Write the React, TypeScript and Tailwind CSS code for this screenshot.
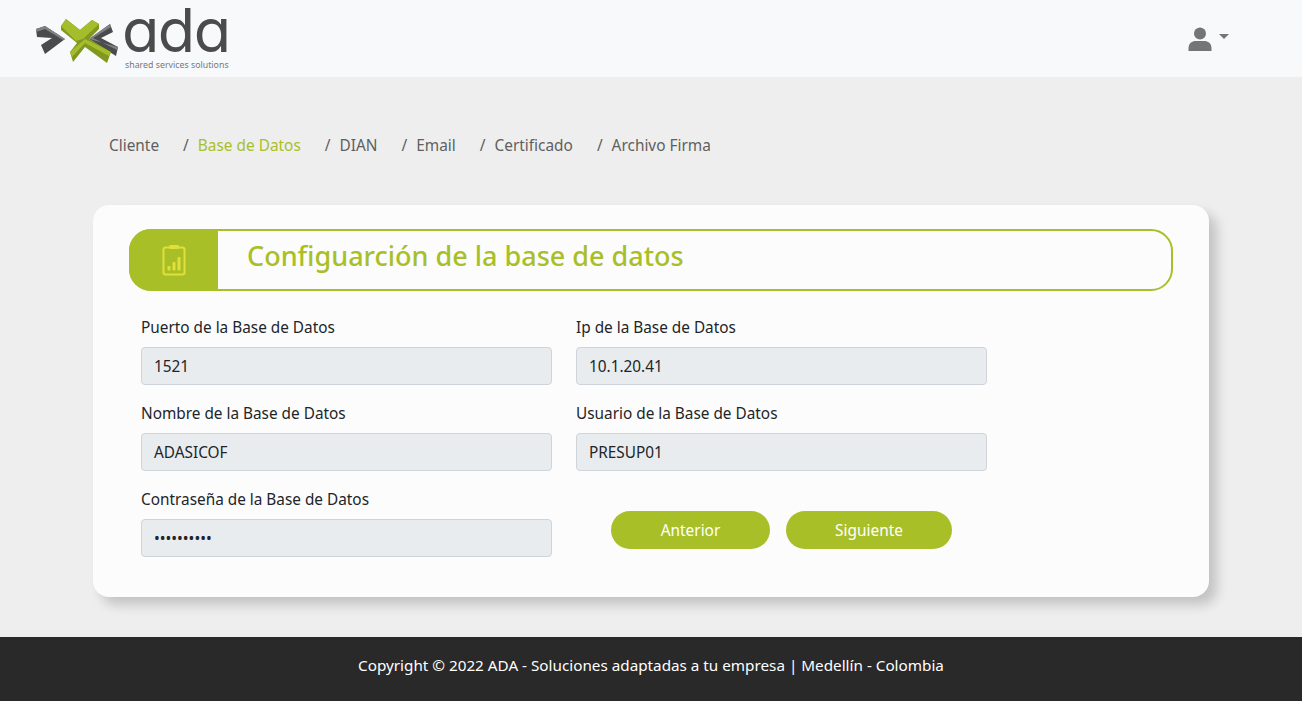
const font = "font-['Noto_Sans',sans-serif]";

function Logo() {
  return (
    <div className="relative w-[240px] h-[77px] shrink-0">
      <svg className="absolute left-[30px] top-[14px]" width="90" height="52" viewBox="0 0 90 52">
        <path d="M6 15 L15 12 L35 25 L15 40 L11 31 L22 24 L7 23Z" fill="#4a4b4d" />
        <path d="M6 15 L15 12 L35 25 L33 26 L15 15 L6 18Z" fill="#808183" />
        <path d="M80 10 L83 18 L71 24 L88 33 L86 42 L59 25Z" fill="#4a4b4d" />
        <path d="M80 10 L81 13 L63 24 L87 36 L88 33 L59 25Z" fill="#808183" />
        <path d="M31 12 L36 5 L50 16 L62 6 L69 10 L69 15 L59 25 L81 38 L77 49 L55 33 L43 48 L40 38 L47 29 L31 16Z" fill="#7f981f" />
        <path d="M36 5 L50 16 L62 6 L69 10 L53 25 L46 27 L31 12Z" fill="#a4bd2a" />
        <path d="M55 25 L81 38 L79 42 L55 29 L42 43 L40 38Z" fill="#a4bd2a" />
      </svg>
      <div className="absolute left-[122px] top-0 text-[61px] leading-[60px] font-normal text-[#4b4b4d] font-['Inter',sans-serif] [font-feature-settings:'cv11'] tracking-[-1.5px]">ada</div>
      <div className="absolute left-[125px] top-[60px] whitespace-nowrap text-[8.8px] leading-[11px] text-[#77787b] font-['Noto_Sans',sans-serif]">shared services solutions</div>
    </div>
  );
}

function Field({ label, value }: { label: string; value: string }) {
  return (
    <div className="w-[411px]">
      <label className="block h-6 text-[15.35px] leading-[25px] text-[#212529] mb-2">{label}</label>
      <div className="h-[38px] bg-[#e9ecef] border border-[#ced4da] rounded-[4px] px-3 pt-[1px] flex items-center text-[15.35px] text-[#212529]">{value}</div>
    </div>
  );
}

const crumbs = ["Cliente", "Base de Datos", "DIAN", "Email", "Certificado", "Archivo Firma"];

export default function App() {
  return (
    <div className={`${font} w-[1302px] h-[701px] bg-[#eeeeee] flex flex-col overflow-hidden`}>
      <header className="h-[77px] bg-[#f8f9fa] flex items-center justify-between pr-[73px] shrink-0">
        <Logo />
        <div className="flex items-center gap-[7px] text-[#757575]">
          <svg width="24" height="24" viewBox="0 0 24 24" fill="currentColor">
            <circle cx="12" cy="6.5" r="6" />
            <path d="M0.5 24 V21 C0.5 16.5 4 14 8 14 H16 C20 14 23.5 16.5 23.5 21 V24Z" />
          </svg>
          <div className="w-0 h-0 border-x-[5px] border-x-transparent border-t-[5px] border-t-[#757575] mb-1" />
        </div>
      </header>

      <main className="flex-1 flex flex-col">
        <nav className="flex items-center pl-[109px] pt-[50px] h-[128px] pb-[40px] text-[15.4px] text-[#5f5f5f]">
          {crumbs.map((c, i) => (
            <span key={c} className={i === 0 ? "" : "ml-[24px]"}>
              {i > 0 && <span className="mr-[9px]">/</span>}
              <span className={i === 1 ? "text-[#a9bf28]" : ""}>{c}</span>
            </span>
          ))}
        </nav>

        <section className="mx-[93px] w-[1116px] h-[392px] bg-[#fcfcfc] rounded-[16px] shadow-[8px_8px_12px_rgba(0,0,0,0.18)] pt-[24px] px-[36px]">
          <div className="h-[62px] flex border-2 border-[#a9bf28] rounded-[22px]">
            <div className="w-[89px] -my-[2px] -ml-[2px] bg-[#a9bf28] rounded-l-[22px] flex items-center justify-center">
              <svg width="24" height="32" viewBox="0 0 24 32" fill="none">
                <rect x="1.5" y="3.5" width="21" height="27" rx="2" stroke="#e2df3a" strokeWidth="2" />
                <rect x="7" y="1" width="10" height="4" rx="1.5" fill="#e2df3a" />
                <rect x="5.5" y="22" width="3" height="4.5" rx="1" fill="#e2df3a" />
                <rect x="10.5" y="18" width="3" height="8.5" rx="1" fill="#e2df3a" />
                <rect x="15.5" y="13" width="3" height="13.5" rx="1" fill="#e2df3a" />
              </svg>
            </div>
            <h1 className="ml-[29px] flex items-center text-[27px] font-medium text-[#a9bf28] pb-[8px]">Configuarción de la base de datos</h1>
          </div>

          <div className="mt-[24px] pl-[12px] flex gap-[24px]">
            <div className="flex flex-col gap-[16px]">
              <Field label="Puerto de la Base de Datos" value="1521" />
              <Field label="Nombre de la Base de Datos" value="ADASICOF" />
              <Field label="Contraseña de la Base de Datos" value="••••••••••" />
            </div>
            <div className="flex flex-col gap-[16px]">
              <Field label="Ip de la Base de Datos" value="10.1.20.41" />
              <Field label="Usuario de la Base de Datos" value="PRESUP01" />
              <div className="h-[70px] flex items-start pl-[35px] pt-[24px] gap-[16px]">
                <button className="w-[159px] h-[38px] rounded-full bg-[#a9bf28] text-white text-[15.4px] pt-[1px]">Anterior</button>
                <button className="w-[166px] h-[38px] rounded-full bg-[#a9bf28] text-white text-[15.4px] pt-[1px]">Siguiente</button>
              </div>
            </div>
          </div>
        </section>
      </main>

      <footer className="h-[64px] bg-[#292929] text-white text-[15.25px] flex items-center justify-center pb-[8px] shrink-0">
        Copyright © 2022 ADA - Soluciones adaptadas a tu empresa | Medellín - Colombia
      </footer>
    </div>
  );
}
